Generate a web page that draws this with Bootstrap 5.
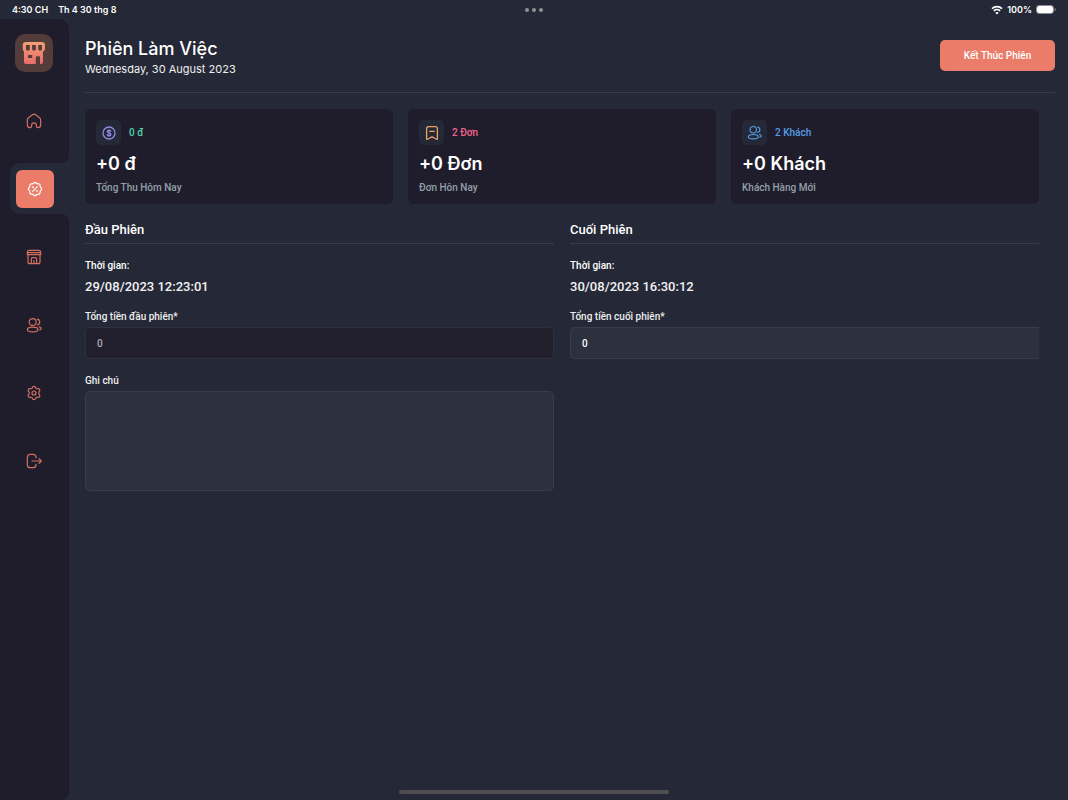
<!DOCTYPE html>
<html lang="vi">
<head>
<meta charset="utf-8">
<meta name="viewport" content="width=device-width, initial-scale=1">
<title>Phiên Làm Việc</title>
<link href="https://cdn.jsdelivr.net/npm/bootstrap@5.3.0/dist/css/bootstrap.min.css" rel="stylesheet">
<style>
:root{--page:#252836;--dark:#1f1d2b;--accent:#ea7c69;--field:#2d303e;--line:#393c49}
body{background:var(--page);color:#fff;font-family:Roboto,"Liberation Sans",sans-serif;font-size:10px;line-height:16px;font-weight:500}
.ui-face{font-family:Inter,"Liberation Sans",sans-serif}
.status{height:19px;font-size:9px;font-weight:600;padding:0 12px}
.status>div{flex:1 1 0}
.clock{gap:10px}
.dots{gap:3px}
.dots i{width:4px;height:4px;border-radius:50%;background:#8f9098}
/* sidebar: dark segments around the notch of the active item */
.side{width:69px}
.seg{background:var(--dark);border-radius:0 8px 8px 0}
.seg-first{height:144px;padding-top:15px;border-radius:0 10px 8px 0}
.brand{width:38px;height:38px;border-radius:10px;background:#543c3a;margin-left:15px}
.nav-item-link{width:38px;height:38px;margin-left:15px;color:#d27060;border-radius:6px}
.seg-first .nav-item-link{margin-top:30px}
.seg-last{padding-top:24px}
.seg-last ul{gap:30px}
.notch-row{height:51px;padding-left:10px;background:linear-gradient(to right,var(--dark) 50%,transparent 50%)}
.notch{height:51px;background:var(--page);border-radius:10px 0 0 10px;padding:7px 6px}
.notch .nav-item-link{margin:0;color:#fff;background:var(--accent)}
.work{padding:19px 13px 24px 16px}
.head{border-bottom:1px solid var(--line);height:55px}
h1{font-size:18px;line-height:22px;font-weight:500;margin:0}
.today{font-size:11px;line-height:18px;font-weight:400;color:#f0f0f2}
.btn-end{background:var(--accent);color:#fff;font-size:10px;font-weight:500;line-height:15px;width:115px;padding:8px 0;border-radius:5px;border:0;margin-top:2px}
.btn-end:hover{background:#f08a78;color:#fff}
.content{padding:16px 16px 0 0}
.tiles{display:grid;grid-template-columns:repeat(3,1fr);gap:15px}
.tile{background:var(--dark);border-radius:6px;padding:11px;height:95px}
.tile-icon{width:25px;height:25px;border-radius:5px;background:var(--page)}
.tile-num{font-size:18px;line-height:22px;font-weight:600;margin-top:8px}
.tile-name{color:#93a0a9;margin-top:5px}
.cols{display:grid;grid-template-columns:1fr 1fr;gap:16px;margin-top:16px}
h2{font-size:13px;line-height:20px;font-weight:500;margin:0 0 14px;padding-bottom:3px;border-bottom:1px solid var(--line)}
.stamp{font-size:13px;line-height:20px;margin:3px 0 12px;color:#f2f2f4}
.lbl{display:block;margin-bottom:2px;color:#eee}
.field{display:block;width:100%;background:var(--field);border:1px solid var(--line);border-radius:5px;color:#fff;padding:7px 11px;font-size:10px;line-height:16px;font-weight:500;height:32px;box-shadow:none}
.field:focus{background:var(--field);color:#fff;border-color:var(--accent);outline:0}
.field.locked{background:#221f2c;border-color:#2d303e;color:#a9abb2}
.field.flush{border-right:0;border-radius:5px 0 0 5px}
textarea.field{height:100px;resize:none}
.note{margin-top:14px}
.home-bar{width:270px;height:4px;border-radius:2px;background:#4e4e50;bottom:6px}
svg{display:block}
.ln{fill:none;stroke:currentColor;stroke-width:1.8;stroke-linecap:round;stroke-linejoin:round}
</style>
</head>
<body class="d-flex flex-column min-vh-100">
<svg width="0" height="0" class="position-absolute" aria-hidden="true">
  <symbol id="people" viewBox="0 0 24 24"><g class="ln"><circle cx="10" cy="7.500" r="5.200"/><path d="M17 3.300c2.200.4 3.600 2 3.600 4.200S19.200 11.300 17 11.700M10 15.200c-4.500 0-8 1.300-8 3.500s3.500 3.500 8 3.500 8-1.300 8-3.500-3.500-3.500-8-3.500zM19.500 14.700c2 .3 3.200 1.200 3.200 2.400 0 1.100-.8 1.800-2 2.200"/></g></symbol>
</svg>
<div class="status ui-face d-flex align-items-center">
  <div class="clock d-flex"><span>4:30 CH</span><span>Th 4 30 thg 8</span></div>
  <div class="dots d-flex justify-content-center"><i></i><i></i><i></i></div>
  <div class="d-flex justify-content-end align-items-center gap-1">
    <svg width="12" height="10" viewBox="0 0 12 10"><g fill="none" stroke="#fff" stroke-width="1.700"><path d="M1 3.700a7.200 7.200 0 0 1 10 0M2.900 5.800a4.500 4.500 0 0 1 6.200 0"/></g><path fill="#fff" d="M6 9.600 4.300 7.800a2.500 2.500 0 0 1 3.400 0z"/></svg>
    <span>100%</span>
    <svg width="20" height="9" viewBox="0 0 20 9"><rect x=".5" y=".5" width="17" height="8" rx="2.500" fill="none" stroke="#8b8d96"/><rect x="1" y="1" width="16" height="7" rx="2" fill="#fff"/><path d="M18.700 3v3c.8-.2 1.100-.8 1.100-1.500S19.500 3.200 18.700 3z" fill="#8b8d96"/></svg>
  </div>
</div>
<div class="d-flex flex-grow-1">
  <nav class="side d-flex flex-column flex-shrink-0" aria-label="Menu">
    <div class="seg seg-first">
      <a href="#" class="brand d-flex align-items-center justify-content-center" aria-label="Cửa hàng">
        <svg width="24" height="24" viewBox="0 0 24 24"><defs><linearGradient id="bg" x1="0" y1="0" x2="0" y2="1"><stop offset="0" stop-color="#f0a074"/><stop offset="1" stop-color="#ec6b6b"/></linearGradient></defs><path fill="url(#bg)" fill-rule="evenodd" d="M4 1h16c2 0 3 1 3 3v3.500c0 1.500-.7 2.500-2 3V21a2 2 0 0 1-2 2h-1v-6.500c0-.8-.5-1.300-1.300-1.300h-1.600c-.8 0-1.300.5-1.300 1.300V23H4a2 2 0 0 1-2-2V10.500C1 10 .8 9 .8 7.500V4c0-2 1-3 3.200-3zM4 4V8c0 2.200 3.800 2.200 3.800 0V4zM10.100 4V8c0 2.200 3.800 2.200 3.800 0V4zM16.200 4V8c0 2.200 3.800 2.200 3.800 0V4zM6 14v3h4.200v-3z"/></svg>
      </a>
      <a href="#" class="nav-item-link d-flex align-items-center justify-content-center" aria-label="Trang chủ">
        <svg width="16" height="16" viewBox="0 0 24 24"><path class="ln" d="M2 10.500c0-1.400.6-2.500 1.700-3.400L9.500 2.700a4 4 0 0 1 5 0l5.800 4.400A4 4 0 0 1 22 10.500V18c0 2.500-1.500 4-4 4-1.700 0-2.500-.8-2.500-2.500V18c0-1.900-1.600-3.200-3.500-3.200S8.500 16.100 8.500 18v1.500C8.500 21.200 7.700 22 6 22c-2.500 0-4-1.500-4-4z"/></svg>
      </a>
    </div>
    <div class="notch-row"><div class="notch">
      <a href="#" class="nav-item-link d-flex align-items-center justify-content-center" aria-label="Phiên làm việc" aria-current="page">
        <svg width="16" height="16" viewBox="0 0 24 24"><g class="ln"><path d="M12 2c1.400 0 2 1.500 3.200 2 1.300.6 2.800-.2 3.800.8s.2 2.500.8 3.800c.5 1.200 2.200 2 2.200 3.400s-1.700 2.200-2.200 3.400c-.6 1.300.2 2.800-.8 3.800s-2.500.2-3.800.8c-1.200.5-1.800 2-3.200 2s-2-1.500-3.200-2c-1.300-.6-2.800.2-3.800-.8s-.2-2.500-.8-3.800C3.700 14.200 2 13.400 2 12s1.700-2.200 2.200-3.400c.6-1.300-.2-2.800.8-3.800s2.500-.2 3.800-.8C10 3.500 10.600 2 12 2zM8.500 15.500l7-7"/></g><g fill="currentColor"><circle cx="9" cy="9.200" r="1.400"/><circle cx="15" cy="14.800" r="1.400"/></g></svg>
      </a>
    </div></div>
    <div class="seg seg-last flex-grow-1">
      <ul class="list-unstyled d-flex flex-column m-0">
        <li><a href="#" class="nav-item-link d-flex align-items-center justify-content-center" aria-label="Cửa hàng"><svg width="16" height="16" viewBox="0 0 24 24"><path class="ln" d="M5 2h14c2 0 3 1 3 3v3.500H2V5c0-2 1-3 3-3zM2 5.300h20M3 8.500V19c0 2 1 3 3 3h12c2 0 3-1 3-3V8.500M8 22v-7c0-1.200.8-2 2-2h4c1.200 0 2 .8 2 2v7M12 17v5"/></svg></a></li>
        <li><a href="#" class="nav-item-link d-flex align-items-center justify-content-center" aria-label="Khách hàng"><svg width="16" height="16"><use href="#people"/></svg></a></li>
        <li><a href="#" class="nav-item-link d-flex align-items-center justify-content-center" aria-label="Cài đặt"><svg width="16" height="16" viewBox="0 0 24 24"><g class="ln"><path d="M12 2c1.800 0 2.200.5 2.400 1.800.3 1.400 1.700 2.200 3.100 1.700 1.400-.5 2-.3 2.900 1.200s.7 2.200-.4 3.100c-1.200 1-1.200 3.400 0 4.400 1.100.9 1.300 1.600.4 3.100s-1.500 1.700-2.900 1.200c-1.400-.5-2.800.3-3.100 1.700-.2 1.300-.6 1.800-2.400 1.800s-2.200-.5-2.400-1.800c-.3-1.400-1.700-2.200-3.100-1.700-1.400.5-2 .3-2.900-1.200s-.7-2.200.4-3.100c1.200-1 1.200-3.400 0-4.400-1.100-.9-1.300-1.600-.4-3.100s1.500-1.700 2.900-1.200c1.400.5 2.800-.3 3.100-1.700C9.800 2.500 10.200 2 12 2z"/><circle cx="12" cy="12" r="3"/></g></svg></a></li>
        <li><a href="#" class="nav-item-link d-flex align-items-center justify-content-center" aria-label="Đăng xuất"><svg width="16" height="16" viewBox="0 0 24 24"><path class="ln" d="M15 7V6.500C15 3.500 13.500 2 10.500 2h-4C3.500 2 2 3.500 2 6.500v11c0 3 1.500 4.500 4.500 4.500h4c3 0 4.500-1.500 4.500-4.500V17M9 12h13.500M19.500 8.500 23 12l-3.500 3.500"/></svg></a></li>
      </ul>
    </div>
  </nav>
  <main class="work flex-grow-1">
    <header class="head d-flex justify-content-between align-items-start">
      <div class="ui-face">
        <h1>Phiên Làm Việc</h1>
        <div class="today">Wednesday, 30 August 2023</div>
      </div>
      <button type="button" class="btn btn-end">Kết Thúc Phiên</button>
    </header>
    <div class="content">
      <section class="tiles">
        <div class="tile">
          <div class="d-flex align-items-center gap-2">
            <span class="tile-icon d-flex align-items-center justify-content-center"><svg width="14" height="14" viewBox="0 0 14 14"><g fill="none" stroke="#9288e0" stroke-linecap="round"><circle cx="7" cy="7" r="6" stroke-width="1.300"/><path stroke-width="1.200" d="M8.800 5.400C8.600 4.700 8 4.400 7 4.400c-1.200 0-1.800.5-1.800 1.200C5.200 7.400 8.900 6.500 8.900 8.400c0 .8-.7 1.300-1.900 1.300-1 0-1.700-.4-1.900-1.100M7 3.500v7"/></g></svg></span>
            <span style="color:#50d1aa">0 đ</span>
          </div>
          <div class="tile-num ui-face">+0 đ</div>
          <div class="tile-name">Tổng Thu Hôm Nay</div>
        </div>
        <div class="tile">
          <div class="d-flex align-items-center gap-2">
            <span class="tile-icon d-flex align-items-center justify-content-center"><svg width="14" height="14" viewBox="0 0 14 14"><path fill="none" stroke="#e8a367" stroke-width="1.300" stroke-linecap="round" stroke-linejoin="round" d="M3.600.7h6.800c1.400 0 2 .7 2 2v10.100c0 .6-.4.700-.8.500L9 11.800c-.8-.5-1.200-.8-2-.8s-1.200.3-2 .8l-2.600 1.500c-.4.200-.8.100-.8-.5V2.700c0-1.300.6-2 2-2zM4.700 5.300h4.600"/></svg></span>
            <span style="color:#f5648c">2 Đơn</span>
          </div>
          <div class="tile-num ui-face">+0 Đơn</div>
          <div class="tile-name">Đơn Hôn Nay</div>
        </div>
        <div class="tile">
          <div class="d-flex align-items-center gap-2">
            <span class="tile-icon d-flex align-items-center justify-content-center" style="color:#559ee6"><svg width="15" height="15"><use href="#people"/></svg></span>
            <span style="color:#559ee6">2 Khách</span>
          </div>
          <div class="tile-num ui-face">+0 Khách</div>
          <div class="tile-name">Khách Hàng Mới</div>
        </div>
      </section>
      <form class="cols">
        <section>
          <h2>Đầu Phiên</h2>
          <div>Thời gian:</div>
          <div class="stamp">29/08/2023 12:23:01</div>
          <label class="lbl" for="open-sum">Tổng tiền đầu phiên*</label>
          <input id="open-sum" class="field locked" type="text" value="0" readonly>
          <div class="note">
            <label class="lbl" for="note">Ghi chú</label>
            <textarea id="note" class="field"></textarea>
          </div>
        </section>
        <section>
          <h2>Cuối Phiên</h2>
          <div>Thời gian:</div>
          <div class="stamp">30/08/2023 16:30:12</div>
          <label class="lbl" for="close-sum">Tổng tiền cuối phiên*</label>
          <input id="close-sum" class="field flush" type="text" value="0">
        </section>
      </form>
    </div>
  </main>
</div>
<div class="home-bar position-fixed start-50 translate-middle-x"></div>
<script src="https://cdn.jsdelivr.net/npm/bootstrap@5.3.0/dist/js/bootstrap.bundle.min.js"></script>
</body>
</html>
